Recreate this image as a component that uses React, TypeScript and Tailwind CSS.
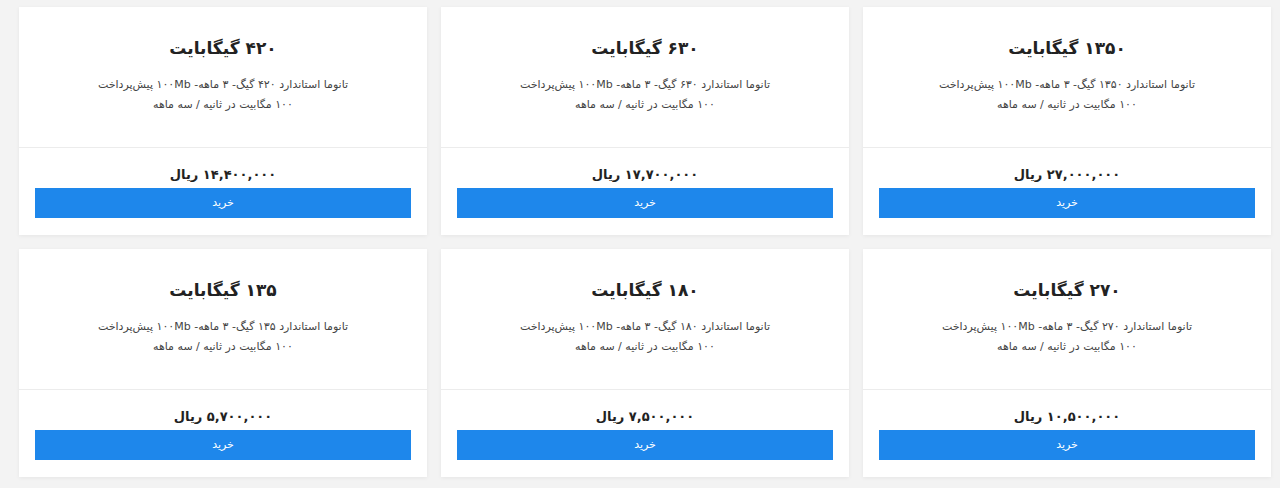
import React from "react";

type Plan = {
  size: string;
  price: string;
};

const plans: Plan[] = [
  { size: "۱۳۵۰", price: "۲۷,۰۰۰,۰۰۰" },
  { size: "۶۳۰", price: "۱۷,۷۰۰,۰۰۰" },
  { size: "۴۲۰", price: "۱۴,۴۰۰,۰۰۰" },
  { size: "۲۷۰", price: "۱۰,۵۰۰,۰۰۰" },
  { size: "۱۸۰", price: "۷,۵۰۰,۰۰۰" },
  { size: "۱۳۵", price: "۵,۷۰۰,۰۰۰" },
];

function PlanCard({ plan }: { plan: Plan }) {
  return (
    <div className="flex h-[228px] flex-col bg-white shadow-[0_1px_4px_rgba(0,0,0,0.06)]">
      <div className="h-[141px] border-b border-[#ececec] pt-[27px] text-center">
        <h3 className="text-[17px] font-bold leading-[28px] text-[#222]">
          {plan.size} گیگابایت
        </h3>
        <p className="mt-[13px] text-[11px] leading-[20px] text-[#444]">
          تانوما استاندارد {plan.size} گیگ- ۳ ماهه- ۱۰۰Mb پیش‌پرداخت
          <br />
          ۱۰۰ مگابیت در ثانیه / سه ماهه
        </p>
      </div>
      <div className="px-4 pt-[17px] text-center">
        <div className="text-[13px] font-bold leading-[20px] text-[#222]">
          {plan.price} ریال
        </div>
        <button className="mt-[3px] h-[30px] w-full bg-[#1e87eb] text-[11px] text-white">
          خرید
        </button>
      </div>
    </div>
  );
}

export default function App() {
  return (
    <main
      dir="rtl"
      className="min-h-[488px] bg-[#f3f3f3] pt-[7px] pr-[9px] pl-[19px]"
      style={{ fontFamily: '"DejaVu Sans", "Noto Sans", sans-serif' }}
    >
      <div className="grid grid-cols-3 gap-[14px]">
        {plans.map((p) => (
          <PlanCard key={p.size} plan={p} />
        ))}
      </div>
    </main>
  );
}
